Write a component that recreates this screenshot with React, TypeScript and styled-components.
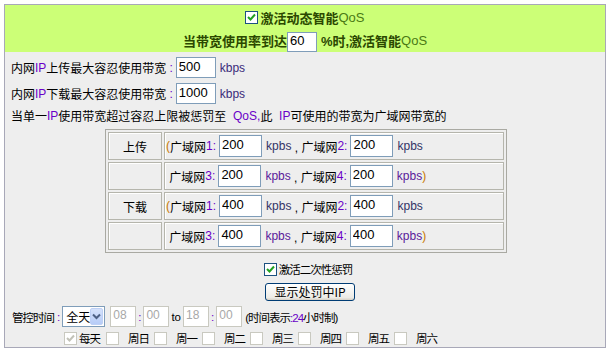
import React from "react";
import styled, { createGlobalStyle } from "styled-components";

const GlobalStyle = createGlobalStyle`
	body {
		margin: 4px;
		background: #ffffff;
		font-family: "Liberation Sans", "Noto Sans CJK SC", sans-serif;
		font-size: 12px;
		color: #000000;
	}
`;

const Frame = styled.div`
	width: 600px;
	border: 1px solid #a8a8b8;
	background: #eeeeee;
`;

const Header = styled.div`
	background: #ccff77;
	height: 47px;
	display: flex;
	flex-direction: column;
	align-items: center;
	font-size: 13px;
`;

const HeadRow = styled.div<{ $h: number }>`
	height: ${(p) => p.$h}px;
	display: flex;
	align-items: center;
	justify-content: center;
	font-weight: bold;
	color: #2b4800;
`;

const QoS = styled.span`
	font-weight: normal;
	color: #4a7a14;
`;

const Body = styled.div`
	display: flex;
	flex-direction: column;
	padding: 0 0 1px 6px;
`;

const Line = styled.div<{ $mt?: number; $h?: number; $center?: boolean; $small?: boolean }>`
	display: flex;
	align-items: center;
	height: ${(p) => p.$h ?? 21}px;
	margin-top: ${(p) => p.$mt ?? 0}px;
	justify-content: ${(p) => (p.$center ? "center" : "flex-start")};
	font-size: ${(p) => (p.$small ? 11.5 : 12)}px;
	letter-spacing: ${(p) => (p.$small ? "-1px" : "normal")};
	white-space: nowrap;
`;

const Ip = styled.span`
	color: #6a00c8;
`;

const Colon = styled.span<{ $ml?: number; $mr?: number }>`
	color: #6a00c8;
	margin: 0 ${(p) => p.$mr ?? 3}px 0 ${(p) => p.$ml ?? 3}px;
`;

const Unit = styled.span<{ $c?: string }>`
	color: ${(p) => p.$c ?? "#3a2a7a"};
	margin-left: 4px;
	letter-spacing: normal;
`;

const TextBox = styled.input<{ $w: number; $h?: number }>`
	box-sizing: border-box;
	width: ${(p) => p.$w}px;
	height: ${(p) => p.$h ?? 21}px;
	border: 1px solid #7f9db9;
	background: #ffffff;
	font-family: "Liberation Sans", sans-serif;
	font-size: 13px;
	letter-spacing: normal;
	padding: 0 0 3px 2px;
	margin: 0;
	color: #000;
	&:disabled {
		border-color: #c9c9c0;
		color: #a8a8a8;
		background: #ffffff;
		font-size: 12px;
	}
`;

const Grid = styled.table`
	margin: 5px 0 0 94px;
	border: 1px solid #a9a9a2;
	border-spacing: 2px;
	width: 402px;
`;

const Cell = styled.td<{ $label?: boolean }>`
	height: 26px;
	padding: 0;
	border: 1px solid #b5b5ac;
	box-shadow: inset 1px 1px 0 #ffffff;
	width: ${(p) => (p.$label ? "52px" : "auto")};
	text-align: ${(p) => (p.$label ? "center" : "left")};
	font-size: 12px;
`;

const CellRow = styled.div`
	display: flex;
	align-items: center;
	padding-left: 1px;
	white-space: nowrap;
`;

const Paren = styled.span`
	color: #c87800;
`;

const Num = styled.span`
	color: #6a00c8;
`;

const BoxWrap = styled.span<{ $disabled?: boolean }>`
	display: inline-flex;
	flex: none;
	width: 11px;
	height: 11px;
	border: 1px solid ${(p) => (p.$disabled ? "#c9c9c0" : "#1c5180")};
	background: #ffffff;
	margin-right: 2px;
	align-items: center;
	justify-content: center;
`;

const Check = ({ on, disabled }: { on?: boolean; disabled?: boolean }) => (
	<BoxWrap $disabled={disabled}>
		{on && (
			<svg width="9" height="9" viewBox="0 0 9 9">
				<path d="M1 4 L3.5 6.5 L8 1.5" fill="none" stroke={disabled ? "#c2c2b8" : "#21a121"} strokeWidth="2" />
			</svg>
		)}
	</BoxWrap>
);

const Button = styled.button`
	box-sizing: border-box;
	width: 90px;
	height: 18px;
	border: 1px solid #003c74;
	border-radius: 3px;
	background: linear-gradient(#ffffff, #ecebe6 85%, #d6d0c5);
	font-family: "Noto Sans CJK SC", sans-serif;
	font-size: 12px;
	padding: 0;
	line-height: 16px;
	margin-left: 4px;
`;

const Select = styled.div`
	box-sizing: border-box;
	width: 43px;
	height: 21px;
	border: 1px solid #7f9db9;
	background: #ffffff;
	display: flex;
	align-items: center;
	justify-content: space-between;
	padding: 1px 1px 1px 3px;
	font-size: 12px;
	letter-spacing: normal;
`;

const SelectBtn = styled.span`
	width: 15px;
	height: 17px;
	border-radius: 2px;
	background: linear-gradient(#d5e2fb, #b7ccf7);
	border: 1px solid #bed0f5;
	box-sizing: border-box;
	display: flex;
	align-items: center;
	justify-content: center;
`;

const Sep = styled.span<{ $c?: string }>`
	margin: 0 2px;
	letter-spacing: normal;
	color: ${(p) => p.$c ?? "#6a00c8"};
`;

const Days = styled.div`
	display: flex;
	align-items: center;
	height: 16px;
	margin: 3px 0 0 53px;
	font-size: 11.5px;
	letter-spacing: -1px;
`;

const Day = styled.span<{ $first?: boolean }>`
	display: inline-flex;
	align-items: center;
	width: ${(p) => (p.$first ? "42px" : "48px")};
`;

const DayLabel = styled.span<{ $gap: number }>`
	margin-left: ${(p) => p.$gap}px;
`;

const wanRow = (a: string, b: string, c: string, d: string, open: boolean) => (
	<CellRow>
		{open ? <Paren>(</Paren> : <span>&nbsp;</span>}
		<span>广域网</span>
		<Num>{a}:</Num>
		<TextBox $w={43} $h={22} defaultValue={c} style={{ marginLeft: 3 }} />
		<Unit $c={open ? "#333366" : "#5a1a9a"}>kpbs</Unit>
		<span>&nbsp;,&nbsp;广域网</span>
		<Num>{b}:</Num>
		<TextBox $w={43} $h={22} defaultValue={d} style={{ marginLeft: 3 }} />
		<Unit $c={open ? "#333366" : "#5a1a9a"}>kpbs{open ? "" : <Paren>)</Paren>}</Unit>
	</CellRow>
);

const days = ["周日", "周一", "周二", "周三", "周四", "周五", "周六"];

export default function App() {
	return (
		<>
			<GlobalStyle />
			<Frame>
				<Header>
					<HeadRow $h={24}>
						<Check on />
						激活动态智能<QoS>QoS</QoS>
					</HeadRow>
					<HeadRow $h={23}>
						当带宽使用率到达
						<TextBox $w={30} $h={20} defaultValue="60" style={{ alignSelf: "flex-end" }} />
						<span style={{ marginLeft: 4 }}>%时,激活智能</span>
						<QoS>QoS</QoS>
					</HeadRow>
				</Header>
				<Body>
					<Line $mt={5}>
						内网<Ip>IP</Ip>上传最大容忍使用带宽
						<Colon>:</Colon>
						<TextBox $w={40} defaultValue="500" />
						<Unit>kbps</Unit>
					</Line>
					<Line $mt={5}>
						内网<Ip>IP</Ip>下载最大容忍使用带宽
						<Colon>:</Colon>
						<TextBox $w={40} defaultValue="1000" />
						<Unit>kbps</Unit>
					</Line>
					<Line $mt={3} $h={17}>
						当单一<Ip>IP</Ip>使用带宽超过容忍上限被惩罚至&nbsp;&nbsp;<Ip>QoS,</Ip>此&nbsp;&nbsp;<Ip>IP</Ip>
						可使用的带宽为广域网带宽的
					</Line>
					<Grid>
						<tbody>
							<tr>
								<Cell $label>上传</Cell>
								<Cell>{wanRow("1", "2", "200", "200", true)}</Cell>
							</tr>
							<tr>
								<Cell $label />
								<Cell>{wanRow("3", "4", "200", "200", false)}</Cell>
							</tr>
							<tr>
								<Cell $label>下载</Cell>
								<Cell>{wanRow("1", "2", "400", "400", true)}</Cell>
							</tr>
							<tr>
								<Cell $label />
								<Cell>{wanRow("3", "4", "400", "400", false)}</Cell>
							</tr>
						</tbody>
					</Grid>
					<Line $mt={8} $h={16} $center $small>
						<Check on />
						激活二次性惩罚
					</Line>
					<Line $mt={6} $h={18} $center>
						<Button>显示处罚中IP</Button>
					</Line>
					<Line $mt={5} $small>
						<span style={{ marginLeft: 1 }}>管控时间</span>
						<Colon $ml={3} $mr={3}>:</Colon>
						<Select>
							全天
							<SelectBtn>
								<svg width="9" height="7" viewBox="0 0 9 7">
									<path d="M1 1.5 L4.5 5 L8 1.5" fill="none" stroke="#4d6185" strokeWidth="2" />
								</svg>
							</SelectBtn>
						</Select>
						<TextBox $w={26} disabled defaultValue="08" style={{ marginLeft: 5 }} />
						<Sep>:</Sep>
						<TextBox $w={26} disabled defaultValue="00" />
						<Sep $c="#000">to</Sep>
						<TextBox $w={26} disabled defaultValue="18" />
						<Sep>:</Sep>
						<TextBox $w={26} disabled defaultValue="00" />
						<span style={{ marginLeft: 3 }}>
							(时间表示<Num>:24</Num>小时制)
						</span>
					</Line>
					<Days>
						<Day $first>
							<Check on disabled />
							<DayLabel $gap={0}>每天</DayLabel>
						</Day>
						{days.map((d) => (
							<Day key={d}>
								<Check disabled />
								<DayLabel $gap={7}>{d}</DayLabel>
							</Day>
						))}
					</Days>
				</Body>
			</Frame>
		</>
	);
}
